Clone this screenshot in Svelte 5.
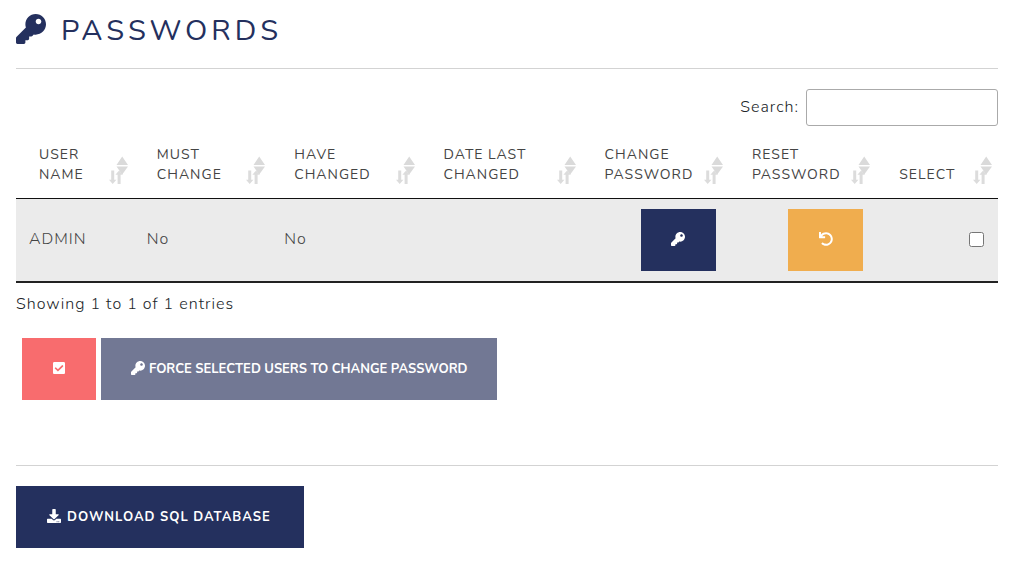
<script>
  const columns = [
    { label: 'User Name', width: 12 },
    { label: 'Must Change', width: 14 },
    { label: 'Have Changed', width: 15.2 },
    { label: 'Date Last Changed', width: 16.4 },
    { label: 'Change Password', width: 15 },
    { label: 'Reset Password', width: 15 },
    { label: 'Select', width: 12.4 }
  ];

  const icons = {
    key: {
      box: '0 0 512 512',
      d: 'M512 176.001C512 273.203 433.202 352 336 352c-11.22 0-22.19-1.062-32.827-3.069l-24.012 27.014A23.999 23.999 0 0 1 261.223 384H224v40c0 13.255-10.745 24-24 24h-40v40c0 13.255-10.745 24-24 24H24c-13.255 0-24-10.745-24-24v-78.059c0-6.365 2.529-12.47 7.029-16.971l161.802-161.802C163.108 213.814 160 195.271 160 176 160 78.798 238.797.001 335.999 0 433.488-.001 512 78.511 512 176.001zM336 128c0 26.51 21.49 48 48 48s48-21.49 48-48-21.49-48-48-48-48 21.49-48 48z'
    },
    undo: {
      box: '0 0 512 512',
      d: 'M212.333 224.333H12c-6.627 0-12-5.373-12-12V12C0 5.373 5.373 0 12 0h48c6.627 0 12 5.373 12 12v78.112C117.773 39.279 184.26 7.47 258.175 8.007c136.906.994 246.448 111.623 246.157 248.532C504.041 393.258 393.12 504 256.333 504c-64.089 0-122.496-24.313-166.51-64.215-5.099-4.622-5.334-12.554-.467-17.42l33.967-33.967c4.474-4.474 11.662-4.717 16.401-.525C170.76 415.336 211.58 432 256.333 432c97.268 0 176-78.716 176-176 0-97.267-78.716-176-176-176-58.496 0-110.28 28.476-142.274 72.333h98.274c6.627 0 12 5.373 12 12v48c0 6.627-5.373 12-12 12z'
    },
    check: {
      box: '0 32 448 448',
      d: 'M400 480H48c-26.51 0-48-21.49-48-48V80c0-26.51 21.49-48 48-48h352c26.51 0 48 21.49 48 48v352c0 26.51-21.49 48-48 48zm-204.686-98.059l184-184c6.248-6.248 6.248-16.379 0-22.627l-22.627-22.627c-6.248-6.248-16.379-6.249-22.628 0L184 302.745l-70.059-70.059c-6.248-6.248-16.379-6.248-22.628 0l-22.627 22.627c-6.248 6.248-6.248 16.379 0 22.627l104 104c6.249 6.25 16.379 6.25 22.628.001z'
    },
    download: {
      box: '0 0 512 512',
      d: 'M216 0h80c13.3 0 24 10.7 24 24v168h87.7c17.8 0 26.7 21.5 14.1 34.1L269.7 378.3c-7.5 7.5-19.8 7.5-27.3 0L90.1 226.1c-12.6-12.6-3.7-34.1 14.1-34.1H192V24c0-13.3 10.7-24 24-24zm296 376v112c0 13.3-10.7 24-24 24H24c-13.3 0-24-10.7-24-24V376c0-13.3 10.7-24 24-24h146.7l49 49c20.1 20.1 52.5 20.1 72.6 0l49-49H488c13.3 0 24 10.7 24 24zm-124 88c0-11-9-20-20-20s-20 9-20 20 9 20 20 20 20-9 20-20zm64 0c0-11-9-20-20-20s-20 9-20 20 9 20 20 20 20-9 20-20z'
    }
  };

  let search = $state('');
  let selected = $state(false);
</script>

{#snippet icon(name)}
  <svg class="icon {name}" viewBox={icons[name].box} aria-hidden="true">
    <path fill="currentColor" d={icons[name].d} />
  </svg>
{/snippet}

<main>
  <h1>{@render icon('key')}<span>Passwords</span></h1>
  <hr />

  <div class="filter">
    <label for="search">Search:</label>
    <input id="search" type="search" bind:value={search} />
  </div>

  <table>
    <colgroup>
      {#each columns as column}
        <col style="width: {column.width}%" />
      {/each}
    </colgroup>
    <thead>
      <tr>
        {#each columns as column}
          <th scope="col">
            {column.label}
            <svg class="sort" viewBox="0 0 19 28" aria-hidden="true">
              <path fill="#dadada" d="M13.2 0.5L19 9H7.5zM7.5 10.5H19L13.2 18.5z" />
              <path fill="#d0d0d0" fill-opacity=".75" d="M2.2 14.5h3v9.3h2.2L3.7 28 0 23.8h2.2zM8.6 28V18.7H6.4L10.1 14.5l3.7 4.2h-2.2V28z" />
            </svg>
          </th>
        {/each}
      </tr>
    </thead>
    <tbody>
      <tr>
        <td>ADMIN</td>
        <td>No</td>
        <td>No</td>
        <td></td>
        <td class="action"><button class="btn navy" aria-label="Change password">{@render icon('key')}</button></td>
        <td class="action"><button class="btn amber" aria-label="Reset password">{@render icon('undo')}</button></td>
        <td><input type="checkbox" aria-label="Select ADMIN" bind:checked={selected} /></td>
      </tr>
    </tbody>
  </table>

  <p>Showing 1 to 1 of 1 entries</p>

  <div class="actions">
    <button class="btn coral" aria-label="Select all">{@render icon('check')}</button>
    <button class="btn muted">{@render icon('key')}Force selected users to change password</button>
  </div>

  <hr />
  <button class="btn navy spaced">{@render icon('download')}Download SQL Database</button>
</main>

<style>
  :global(body) {
    background: #fff;
  }

  main {
    padding: 12px 15px 16px 16px;
    color: #212529;
    font: 300 16px/24px Nunito, Lato, sans-serif;
    letter-spacing: 1px;
  }

  h1 {
    display: flex;
    align-items: center;
    gap: 15px;
    margin: 0 0 18px;
    color: #24305e;
    font-size: 29px;
    font-weight: 400;
    line-height: 38px;
    letter-spacing: 4px;
    text-transform: uppercase;
  }

  h1 .icon {
    width: 30px;
    height: 30px;
    margin-bottom: 4px;
  }

  hr {
    height: 1px;
    margin: 0 0 20px;
    border: 0;
    background: #d3d3d3;
  }

  .filter {
    display: flex;
    justify-content: flex-end;
    align-items: center;
    gap: 7px;
  }

  .filter label {
    padding-bottom: 2px;
  }

  .filter input {
    box-sizing: border-box;
    width: 192px;
    height: 37px;
    padding: 5px;
    border: 1px solid #aaa;
    border-radius: 3px;
    background: transparent;
    font: inherit;
    outline: 0;
  }

  table {
    width: 100%;
    margin-top: 8px;
    border-collapse: separate;
    border-spacing: 0;
    border-bottom: 2px solid #222;
    table-layout: fixed;
    color: #444;
  }

  th {
    position: relative;
    padding: 11px 30px 13px 23px;
    border-bottom: 1px solid #111;
    font-size: 14px;
    font-weight: 400;
    line-height: 20px;
    text-align: left;
    text-transform: uppercase;
    vertical-align: bottom;
  }

  .sort {
    position: absolute;
    right: 6px;
    bottom: 14px;
    width: 19px;
    height: 28px;
  }

  td {
    padding: 10px 14px 12px 13px;
    background: #ebebeb;
  }

  .action {
    padding: 10px 13px;
  }

  .action .btn {
    margin-left: auto;
  }

  td input {
    display: block;
    width: 15px;
    height: 15px;
    margin: 0 0 0 auto;
  }

  p {
    margin: 9px 0 22px;
  }

  .actions {
    display: flex;
    gap: 5px;
    margin: 0 6px 65px;
  }

  .btn {
    display: flex;
    justify-content: center;
    align-items: center;
    gap: 4px;
    min-width: 75px;
    height: 62px;
    padding: 0 30px;
    border: 0;
    color: #fff;
    font: 700 13px/20px Nunito, Lato, sans-serif;
    text-transform: uppercase;
    cursor: pointer;
  }

  .icon {
    flex: none;
    width: 14px;
    height: 14px;
    margin-bottom: 2px;
  }

  .check {
    width: 12px;
    height: 12px;
  }

  .navy {
    background: #24305e;
  }

  .amber {
    background: #f0ad4e;
  }

  .coral {
    min-width: 74px;
    background: #f86c6e;
  }

  .muted {
    background: #727894;
  }

  .spaced {
    gap: 6px;
    padding: 0 33px 0 31px;
    letter-spacing: 1px;
  }
</style>
